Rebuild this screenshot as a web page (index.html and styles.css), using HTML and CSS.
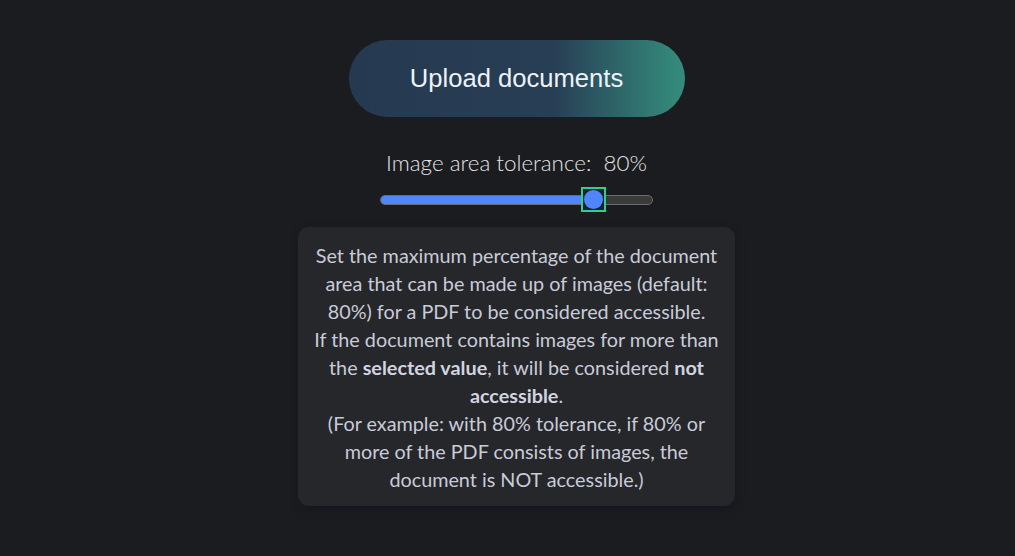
FILE: index.html
```html
<!DOCTYPE html>
<html lang="en">
<head>
<meta charset="utf-8">
<title>Upload</title>
<link rel="stylesheet" href="styles.css">
</head>
<body>
<main class="page">
  <button class="upload-btn" type="button">Upload documents</button>
  <div class="tolerance">
    <label class="tol-label">Image area tolerance:&nbsp; 80%</label>
    <div class="slider">
      <div class="track">
        <div class="fill" style="width: 78%"></div>
      </div>
      <div class="thumb" style="left: 78%"><span class="dot"></span></div>
    </div>
  </div>
  <section class="info">
    <p>Set the maximum percentage of the document area that can be made up of images (default: 80%) for a PDF to be considered accessible.</p>
    <p>If the document contains images for more than the <strong>selected value</strong>, it will be considered <strong>not accessible</strong>.</p>
    <p>(For example: with 80% tolerance, if 80% or more of the PDF consists of images, the document is NOT accessible.)</p>
  </section>
</main>
</body>
</html>
```

FILE: styles.css
```css
* { box-sizing: border-box; }
html, body { margin: 0; height: 100%; }
body {
  background: #1b1c1f;
  font-family: "Lato", "Open Sans", sans-serif;
}
.page {
  display: flex;
  flex-direction: column;
  align-items: center;
  padding-top: 40px;
  padding-left: 18px;
}
.upload-btn {
  width: 336px;
  height: 77px;
  border: none;
  border-radius: 39px;
  background: linear-gradient(90deg, #253a51 0%, #283e55 61%, #34887a 97%, #358c7b 100%);
  color: #eef2f8;
  font-family: "Liberation Sans", Arial, sans-serif;
  font-size: 25.6px;
  padding: 0;
  cursor: pointer;
}
.tolerance {
  margin-top: 32px;
  display: flex;
  flex-direction: column;
  align-items: center;
}
.tol-label {
  color: #e4e4e6;
  font-size: 22.4px;
  font-weight: 300;
  line-height: 28px;
}
.slider {
  position: relative;
  width: 273px;
  height: 25px;
  margin-top: 10px;
  display: flex;
  align-items: center;
}
.track {
  width: 100%;
  height: 10px;
  border-radius: 5px;
  background: #3a3a3b;
  border: 1px solid #6b6b6d;
  overflow: hidden;
}
.fill {
  height: 100%;
  background: #4f86f9;
}
.thumb {
  position: absolute;
  top: 0;
  width: 25px;
  height: 25px;
  margin-left: -12px;
  border: 2.5px solid #2fcf8e;
  background: #1c2030;
  display: flex;
  align-items: center;
  justify-content: center;
}
.dot {
  width: 19px;
  height: 19px;
  border-radius: 50%;
  background: #5086fb;
}
.info {
  margin-top: 15px;
  width: 437px;
  background: #25272b;
  border-radius: 11px;
  padding: 14px 13px 13px;
  box-shadow: 0 4px 10px rgba(10, 20, 30, 0.45);
  color: #c9cbd8;
  font-size: 19.8px;
  line-height: 28px;
  text-align: center;
}
.info p { margin: 0; }
.info strong { font-weight: 700; color: #d2d4e0; }
```
